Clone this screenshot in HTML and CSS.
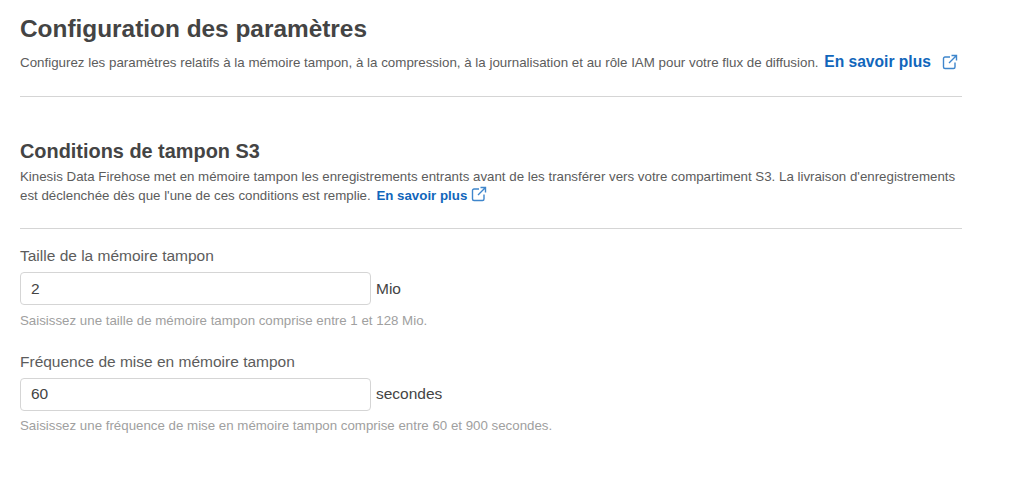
FILE: index.html
```html
<!DOCTYPE html>
<html lang="fr">
<head>
    <meta charset="UTF-8">
    <title>Configuration des paramètres</title>
    <link rel="stylesheet" href="styles.css">
</head>
<body>
    <div class="page">
        <h1>Configuration des paramètres</h1>
        <p class="intro">Configurez les paramètres relatifs à la mémoire tampon, à la compression, à la journalisation et au rôle IAM pour votre flux de diffusion.
            <a class="link link-large" href="#">En savoir plus<svg class="ext-icon ext-large" viewBox="0 0 16 16"><path d="M8 3H3a1.500 1.500 0 0 0-1.500 1.500V13A1.500 1.500 0 0 0 3 14.500h8.500A1.500 1.500 0 0 0 13 13V8.500M9.500 1.500h5v5M14.500 1.500 7 9"/></svg></a>
        </p>
        <hr class="divider">

        <h2>Conditions de tampon S3</h2>
        <p class="desc">Kinesis Data Firehose met en mémoire tampon les enregistrements entrants avant de les transférer vers votre compartiment S3. La livraison d'enregistrements est déclenchée dès que l'une de ces conditions est remplie.
            <a class="link" href="#">En savoir plus<svg class="ext-icon" viewBox="0 0 16 16"><path d="M8 3H3a1.500 1.500 0 0 0-1.500 1.500V13A1.500 1.500 0 0 0 3 14.500h8.500A1.500 1.500 0 0 0 13 13V8.500M9.500 1.500h5v5M14.500 1.500 7 9"/></svg></a>
        </p>
        <hr class="divider divider-tight">

        <div class="field">
            <label class="field-label" for="bufferSize">Taille de la mémoire tampon</label>
            <div class="field-row">
                <input class="field-input" type="text" id="bufferSize" value="2">
                <span class="unit">Mio</span>
            </div>
            <div class="hint">Saisissez une taille de mémoire tampon comprise entre 1 et 128 Mio.</div>
        </div>

        <div class="field">
            <label class="field-label" for="bufferInterval">Fréquence de mise en mémoire tampon</label>
            <div class="field-row">
                <input class="field-input" type="text" id="bufferInterval" value="60">
                <span class="unit">secondes</span>
            </div>
            <div class="hint">Saisissez une fréquence de mise en mémoire tampon comprise entre 60 et 900 secondes.</div>
        </div>
    </div>
</body>
</html>
```

FILE: styles.css
```css
body {
    font-family: 'Liberation Sans', Arial, sans-serif;
    margin: 0;
    background: #fff;
    color: #5c5c5c;
}
.page {
    width: 942px;
    padding: 15px 0 0 20px;
}
h1 {
    font-size: 24.4px;
    line-height: 28px;
    font-weight: bold;
    color: #444;
    margin: 0 0 9px;
}
h2 {
    font-size: 19.9px;
    line-height: 24px;
    font-weight: bold;
    color: #444;
    margin: 0 0 4px;
}
.intro {
    font-size: 13.35px;
    line-height: 20px;
    margin: 0 0 23px;
}
.desc {
    font-size: 13.3px;
    line-height: 19px;
    margin: 0 0 23px;
}
.divider {
    border: none;
    border-top: 1px solid #d5d5d5;
    margin: 0 0 42px;
}
.divider-tight {
    margin-bottom: 17px;
}
.link {
    color: #1166bb;
    font-weight: bold;
    text-decoration: none;
    white-space: nowrap;
    margin-left: 2px;
}
.link-large {
    font-size: 15.6px;
    margin-left: 2px;
}
.ext-icon {
    width: 16px;
    height: 16px;
    margin-left: 4px;
    vertical-align: -2px;
    fill: none;
    stroke: #3f86cc;
    stroke-width: 1.400;
}
.ext-large {
    margin-left: 11px;
    vertical-align: -3px;
}
.field {
    margin-bottom: 23px;
}
.field-label {
    display: block;
    font-size: 15.5px;
    line-height: 20px;
    margin-bottom: 6px;
}
.field-row {
    display: flex;
    align-items: center;
    gap: 5px;
}
.field-input {
    width: 351px;
    height: 33px;
    box-sizing: border-box;
    padding: 0 10px;
    border: 1px solid #d5d5d5;
    border-radius: 4px;
    font-family: inherit;
    font-size: 15.5px;
    color: #444;
}
.unit {
    font-size: 15.5px;
    color: #444;
}
.hint {
    font-size: 13.3px;
    line-height: 16px;
    color: #a0a0a0;
    margin-top: 7.500px;
}
```
